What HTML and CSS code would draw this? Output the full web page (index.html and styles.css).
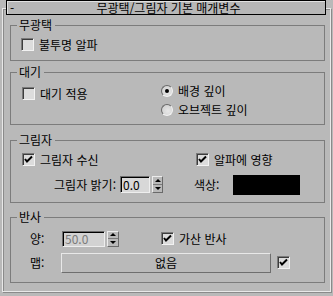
FILE: index.html
```html
<!DOCTYPE html>
<html lang="ko">
<head>
  <meta charset="UTF-8">
  <title>무광택/그림자 기본 매개변수</title>
  <link rel="stylesheet" href="styles.css">
</head>
<body>

  <div class="rollout">
    <div class="rollout-title">
      <span class="toggle">-</span>
      <span class="title">무광택/그림자 기본 매개변수</span>
    </div>

    <div class="rollout-body">
      <!-- 무광택 -->
      <fieldset class="group g-matte">
        <legend>무광택</legend>
        <div class="content">
          <label class="check"><span class="box"></span>불투명 알파</label>
        </div>
      </fieldset>

      <!-- 대기 -->
      <fieldset class="group g-atmos">
        <legend>대기</legend>
        <div class="content">
          <div class="col-left">
            <label class="check"><span class="box"></span>대기 적용</label>
          </div>
          <div class="col-right">
            <label class="radio"><span class="dot on"></span>배경 깊이</label>
            <label class="radio"><span class="dot"></span>오브젝트 깊이</label>
          </div>
        </div>
      </fieldset>

      <!-- 그림자 -->
      <fieldset class="group g-shadow">
        <legend>그림자</legend>
        <div class="content">
          <div class="row row-checks">
            <label class="check first"><span class="box checked"><svg viewBox="0 0 11 11"><path d="M2 5 L4 7.5 L9 2.5" /></svg></span>그림자 수신</label>
            <label class="check"><span class="box checked"><svg viewBox="0 0 11 11"><path d="M2 5 L4 7.5 L9 2.5" /></svg></span>알파에 영향</label>
          </div>
          <div class="row row-bright">
            <span class="lbl lbl-bright">그림자 밝기:</span>
            <span class="edit edit-bright">0.0</span>
            <span class="spin"><span class="up"></span><span class="down"></span></span>
            <span class="lbl lbl-color">색상:</span>
            <span class="swatch"></span>
          </div>
        </div>
      </fieldset>

      <!-- 반사 -->
      <fieldset class="group g-reflect">
        <legend>반사</legend>
        <div class="content">
          <div class="row row-amount">
            <span class="lbl lbl-amount">양:</span>
            <span class="edit edit-amount disabled">50.0</span>
            <span class="spin"><span class="up"></span><span class="down"></span></span>
            <label class="check additive"><span class="box checked"><svg viewBox="0 0 11 11"><path d="M2 5 L4 7.5 L9 2.5" /></svg></span>가산 반사</label>
          </div>
          <div class="row row-map">
            <span class="lbl lbl-map">맵:</span>
            <button class="map-btn">없음</button>
            <span class="box checked map-check"><svg viewBox="0 0 11 11"><path d="M2 5 L4 7.5 L9 2.5" /></svg></span>
          </div>
        </div>
      </fieldset>
    </div>
  </div>

</body>
</html>
```

FILE: styles.css
```css
body {
  margin: 0;
  background-color: #b9b9b9;
  color: #000;
  font-family: "Noto Sans CJK KR", "Liberation Sans", sans-serif;
  font-size: 12px;
  line-height: 12px;
}

.rollout {
  width: 333px;
  height: 296px;
}

.rollout-title {
  position: relative;
  z-index: 1;
  display: flex;
  align-items: center;
  height: 15px;
  margin: 0 7px 0 6px;
  box-sizing: border-box;
  border: 1px solid #000;
  box-shadow: inset 1px 1px #e2e2e2;
  background-color: #b7b7b7;
}

.toggle {
  width: 0;
  margin-left: 3px;
}

.title {
  flex: 1;
  text-align: center;
  margin-left: 2px;
}

.rollout-body {
  margin: -7px 2px 0 2px;
  height: 284px;
  box-sizing: border-box;
  padding: 10px 0 0 0;
  border: 1px solid #e8e8e8;
  box-shadow: inset 1px 1px #8a8a8a, 1px 1px #8a8a8a;
}

/* group boxes */
.group {
  margin: 0 5px 0 7px;
  padding: 0;
  border: 1px solid #7c7c7c;
  min-inline-size: 0;
}

.group legend {
  margin-left: 6px;
  padding: 0 3px 0 2px;
  line-height: 12px;
}

.g-atmos { margin-top: 5px; }
.g-shadow { margin-top: 9px; }
.g-reflect { margin-top: 8px; }

.g-matte .content { padding: 6px 0 8px 10px; }
.g-atmos .content { display: flex; padding: 3px 0 5px 11px; }
.g-shadow .content { padding: 4px 0 7px 11px; }
.g-reflect .content { padding: 4px 0 9px 19px; }

.row {
  display: flex;
  align-items: center;
}

/* checkbox */
.check {
  display: flex;
  align-items: center;
  height: 15px;
}

.box {
  display: inline-block;
  flex: none;
  width: 13px;
  height: 13px;
  margin-right: 5px;
  box-sizing: border-box;
  border: 1px solid;
  border-color: #7a7a7a #f2f2f2 #f2f2f2 #7a7a7a;
  box-shadow: inset 1px 1px #3c3c3c;
  background-color: #dcdcdc;
}

.box svg {
  display: block;
  width: 11px;
  height: 11px;
}

.box svg path {
  fill: none;
  stroke: #000;
  stroke-width: 2;
}

/* radio */
.radio {
  display: flex;
  align-items: center;
  height: 19px;
}

.dot {
  flex: none;
  width: 12px;
  height: 12px;
  margin-right: 5px;
  box-sizing: border-box;
  border-radius: 50%;
  border: 1px solid;
  border-color: #6a6a6a #f2f2f2 #f2f2f2 #6a6a6a;
  background: radial-gradient(circle at 60% 60%, #e8e8e8 0, #d4d4d4 70%);
  display: flex;
  align-items: center;
  justify-content: center;
}

.dot.on::after {
  content: "";
  width: 4px;
  height: 4px;
  border-radius: 50%;
  background-color: #000;
}

.col-left {
  width: 139px;
  padding-top: 5px;
}

.col-left .check {
  height: 15px;
}

/* 그림자 */
.row-checks {
  height: 19px;
}

.row-checks .first {
  width: 174px;
}

.row-bright {
  height: 21px;
  margin-top: 5px;
}

.lbl-bright {
  width: 94px;
  text-align: right;
  margin-right: 4px;
}

.edit {
  display: flex;
  align-items: center;
  height: 17px;
  box-sizing: border-box;
  padding-left: 2px;
  border: 1px solid;
  border-color: #6e6e6e #eeeeee #eeeeee #6e6e6e;
  box-shadow: inset 1px 1px #000;
  background-color: #d8d8d8;
}

.edit-bright {
  width: 30px;
  margin-right: 2px;
}

.edit.disabled {
  color: #7a7a7a;
  background-color: #d2d2d2;
}

.spin {
  display: flex;
  flex-direction: column;
  width: 11px;
  height: 17px;
  box-sizing: border-box;
  border: 1px solid;
  border-color: #ececec #6a6a6a #6a6a6a #ececec;
}

.spin .up,
.spin .down {
  flex: 1;
  display: flex;
  align-items: center;
  justify-content: center;
}

.spin .up { border-bottom: 1px solid #7a7a7a; }

.spin .up::after {
  content: "";
  border-left: 3px solid transparent;
  border-right: 3px solid transparent;
  border-bottom: 3px solid #000;
}

.spin .down::after {
  content: "";
  border-left: 3px solid transparent;
  border-right: 3px solid transparent;
  border-top: 3px solid #000;
}

.lbl-color {
  width: 39px;
  margin-left: 31px;
}

.swatch {
  width: 67px;
  height: 20px;
  background-color: #000;
}

/* 반사 */
.row-amount {
  height: 23px;
}

.lbl-amount {
  width: 32px;
}

.edit-amount {
  width: 43px;
  height: 16px;
  margin-right: 2px;
}

.row-amount .spin {
  width: 12px;
  height: 16px;
}

.additive {
  margin-left: 42px;
}

.row-map {
  height: 21px;
  margin-top: 2px;
}

.lbl-map {
  width: 31px;
}

.map-btn {
  width: 210px;
  height: 20px;
  margin: 0 6px 0 0;
  padding: 0;
  font: inherit;
  color: #000;
  background-color: #b9b9b9;
  border: 1px solid;
  border-color: #e8e8e8 #6e6e6e #6e6e6e #e8e8e8;
}

.map-check {
  margin-right: 0;
}
```
